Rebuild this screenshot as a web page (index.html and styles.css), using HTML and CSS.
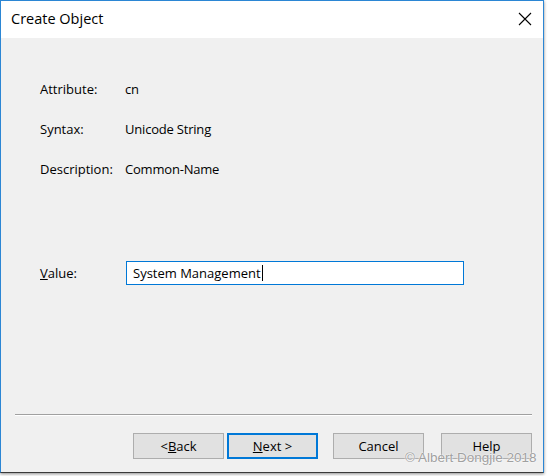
FILE: index.html
```html
<!DOCTYPE html>
<html>
<head>
<meta charset="utf-8">
<link rel="stylesheet" href="styles.css">
</head>
<body>
<div class="window">
  <div class="titlebar">
    <span class="title">Create Object</span>
    <svg class="close" width="14" height="14" viewBox="0 0 14 14"><path d="M1 1 L13 13 M13 1 L1 13" stroke="#000" stroke-width="1.1" fill="none"/></svg>
  </div>
  <div class="content">
    <div class="fields">
      <div class="row"><span class="label">Attribute:</span><span class="val">cn</span></div>
      <div class="row"><span class="label">Syntax:</span><span class="val">Unicode String</span></div>
      <div class="row"><span class="label">Description:</span><span class="val">Common-Name</span></div>
    </div>
    <div class="value-row">
      <span class="label"><u>V</u>alue:</span>
      <div class="input"><span>System Management</span><span class="caret"></span></div>
    </div>
    <div class="footer">
      <div class="sep"></div>
      <div class="buttons">
        <div class="btn b-back">&lt; <u>B</u>ack</div>
        <div class="btn b-next"><u>N</u>ext &gt;</div>
        <div class="btn b-cancel">Cancel</div>
        <div class="btn b-help">Help</div>
      </div>
    </div>
  </div>
  <div class="watermark">© Albert Dongjie 2018</div>
</div>
</body>
</html>
```
FILE: styles.css
```css
html, body {
  margin: 0;
  padding: 0;
  background: #ffffff;
}
body {
  width: 550px;
  height: 476px;
  overflow: hidden;
  font-family: "Open Sans", "Noto Sans", sans-serif;
  font-size: 13px;
  color: #000;
}
.window {
  position: relative;
  box-sizing: border-box;
  width: 544px;
  height: 473px;
  border: 1px solid #2b86d4;
  border-bottom-color: #3a3a3a;
  box-shadow: 0 1px 3px rgba(0,0,0,0.45);
  display: flex;
  flex-direction: column;
  background: #f0f0f0;
}
.titlebar {
  height: 37px;
  background: #fff;
  display: flex;
  align-items: center;
  justify-content: space-between;
  padding: 0 11px 0 10px;
}
.title {
  font-size: 14.5px;
  line-height: 20px;
  margin-top: -1px;
}
.close {
  display: block;
  margin-top: -1px;
}
.content {
  flex: 1;
  display: flex;
  flex-direction: column;
  padding-top: 41px;
}
.fields {
  display: flex;
  flex-direction: column;
  gap: 20px;
  padding-left: 39px;
}
.row {
  display: flex;
  line-height: 20px;
  height: 20px;
}
.label {
  width: 85px;
  flex: none;
}
.val {
  letter-spacing: -0.2px;
}
.value-row {
  display: flex;
  align-items: center;
  padding-left: 39px;
  margin-top: 82px;
  line-height: 20px;
}
.value-row .label {
  width: 86px;
}
.input {
  box-sizing: border-box;
  width: 338px;
  height: 24px;
  border: 1px solid #0078d7;
  background: #fff;
  display: flex;
  align-items: center;
  padding-left: 6px;
}
.caret {
  display: inline-block;
  width: 1px;
  height: 16px;
  background: #000;
  margin-left: 1px;
}
.footer {
  margin-top: auto;
  padding-bottom: 13px;
}
.sep {
  margin: 0 11px 0 14px;
  border-top: 1px solid #a0a0a0;
  border-bottom: 1px solid #fff;
}
.buttons {
  display: flex;
  justify-content: flex-end;
  padding-right: 11px;
  margin-top: 17px;
}
.btn {
  box-sizing: border-box;
  width: 91px;
  height: 26px;
  border: 1px solid #adadad;
  background: #e1e1e1;
  display: flex;
  align-items: center;
  justify-content: center;
  line-height: 18px;
  padding-bottom: 1px;
}
.b-next {
  border: 2px solid #0078d7;
  margin-left: 3px;
}
.b-cancel {
  margin-left: 15px;
}
.b-help {
  margin-left: 17px;
}
.watermark {
  position: absolute;
  left: 404px;
  top: 450px;
  font-family: "Liberation Sans", Arial, sans-serif;
  font-size: 13.5px;
  line-height: 13px;
  color: #a0a0a0;
  text-shadow: 0 0 2px #fff, 0 0 1px #fff;
  white-space: nowrap;
}
```
